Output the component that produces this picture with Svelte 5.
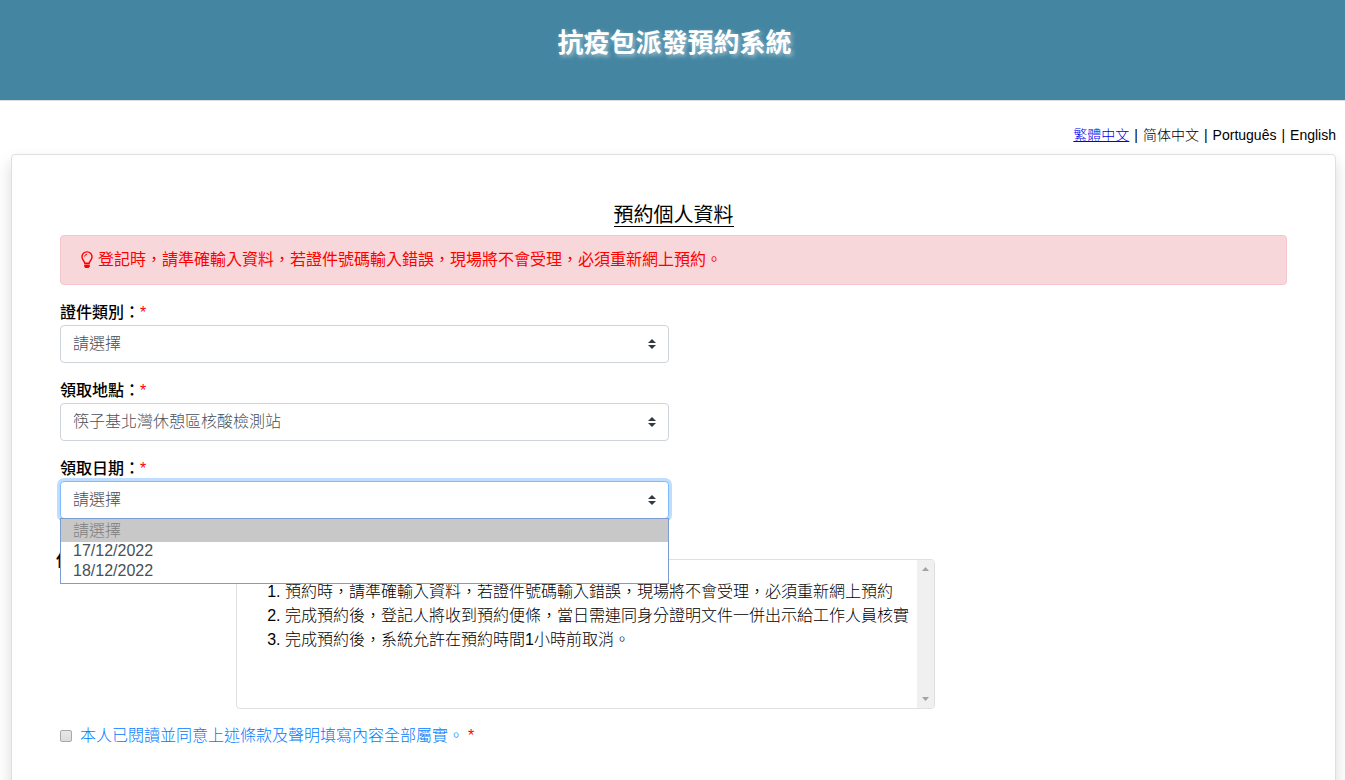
<script lang="ts">
	const languages = [
		{ code: 'zh-Hant', name: '繁體中文' },
		{ code: 'zh-Hans', name: '简体中文' },
		{ code: 'pt', name: 'Português' },
		{ code: 'en', name: 'English' }
	];

	const idTypes = ['澳門居民身份證', '外地僱員身份認別證', '護照'];
	const locations = ['筷子基北灣休憩區核酸檢測站'];
	const dates = ['17/12/2022', '18/12/2022'];

	const terms = [
		'預約時，請準確輸入資料，若證件號碼輸入錯誤，現場將不會受理，必須重新網上預約',
		'完成預約後，登記人將收到預約便條，當日需連同身分證明文件一併出示給工作人員核實',
		'完成預約後，系統允許在預約時間1小時前取消。'
	];

	let current = $state('zh-Hant');
	let idType = $state('');
	let location = $state(locations[0]);
	let date = $state('');
	let dateOpen = $state(true);
	let agreed = $state(false);

	function toggleDates(e: MouseEvent) {
		e.preventDefault();
		dateOpen = !dateOpen;
	}

	function pickDate(value: string) {
		date = value;
		dateOpen = false;
	}

	function switchLanguage(e: MouseEvent, code: string) {
		e.preventDefault();
		current = code;
	}
</script>

{#snippet caret()}
	<svg class="caret" viewBox="0 0 4 5" aria-hidden="true">
		<path fill="#343a40" d="M2 0L0 2h4zm0 5L0 3h4z" />
	</svg>
{/snippet}

<div class="page" lang="zh-Hant">
	<header>
		<h1>抗疫包派發預約系統</h1>
	</header>

	<nav>
		{#each languages as language, i (language.code)}
			{#if i > 0}<span>|</span>{/if}
			<a
				href="#{language.code}"
				lang={language.code}
				class:active={current === language.code}
				onclick={(e) => switchLanguage(e, language.code)}>{language.name}</a
			>
		{/each}
	</nav>

	<main>
		<h2><span>預約個人資料</span></h2>

		<div class="alert" role="alert">
			<svg viewBox="0 0 12 18" aria-hidden="true">
				<path
					d="M3.8 12.2C3.6 10 1 9 1 5.9a5 5 0 0 1 10 0C11 9 8.4 10 8.2 12.2z"
					fill="none"
					stroke="currentColor"
					stroke-width="1.4"
				/>
				<path d="M3.6 5.6A2.3 2.3 0 0 1 6 3.4" fill="none" stroke="currentColor" />
				<path d="M3.2 13.6h5.6v1.8L7.6 17H4.4l-1.2-1.6z" fill="currentColor" />
			</svg>
			<span>登記時，請準確輸入資料，若證件號碼輸入錯誤，現場將不會受理，必須重新網上預約。</span>
		</div>

		<form>
			<div class="field">
				<label for="id-type">證件類別：<span class="required">*</span></label>
				<div class="control">
					<select id="id-type" bind:value={idType}>
						<option value="" disabled>請選擇</option>
						{#each idTypes as item}
							<option value={item}>{item}</option>
						{/each}
					</select>
					{@render caret()}
				</div>
			</div>

			<div class="field">
				<label for="location">領取地點：<span class="required">*</span></label>
				<div class="control">
					<select id="location" bind:value={location}>
						{#each locations as item}
							<option value={item}>{item}</option>
						{/each}
					</select>
					{@render caret()}
				</div>
			</div>

			<div class="field">
				<label for="date">領取日期：<span class="required">*</span></label>
				<div class="control">
					<select id="date" class:open={dateOpen} bind:value={date} onmousedown={toggleDates}>
						<option value="" disabled>請選擇</option>
						{#each dates as item}
							<option value={item}>{item}</option>
						{/each}
					</select>
					{@render caret()}
					{#if dateOpen}
						<div class="menu">
							<button type="button" class="placeholder" disabled>請選擇</button>
							{#each dates as item}
								<button type="button" onclick={() => pickDate(item)}>{item}</button>
							{/each}
						</div>
					{/if}
				</div>
			</div>

			<section class="terms">
				<h3>使用條款：</h3>
				<div class="terms-box">
					<ol>
						{#each terms as term}
							<li>{term}</li>
						{/each}
					</ol>
					<div class="scrollbar" aria-hidden="true">
						<svg viewBox="0 0 7 4"><path d="M3.5 0L7 4H0z" /></svg>
						<svg viewBox="0 0 7 4"><path d="M0 0h7L3.5 4z" /></svg>
					</div>
				</div>
			</section>

			<div class="agree">
				<input id="agree" type="checkbox" bind:checked={agreed} />
				<label for="agree">本人已閱讀並同意上述條款及聲明填寫內容全部屬實。</label>
				<span class="required">*</span>
			</div>
		</form>
	</main>
</div>

<style>
	:global(body) {
		background: #fff;
	}
	.page {
		font-family: 'Liberation Sans', 'Noto Sans CJK TC', sans-serif;
		font-size: 16px;
		font-weight: 300;
		line-height: 24px;
		color: #000;
	}
	header {
		box-sizing: border-box;
		height: 101px;
		padding: 24px 0 0 4px;
		background: #4486a2;
		border-bottom: 1px solid #ddd;
		text-align: center;
	}
	h1 {
		margin: 0;
		font-size: 26px;
		line-height: 38px;
		color: #fff;
		text-shadow: 2px 2px 4px rgba(255, 255, 255, 0.5);
	}
	nav {
		display: flex;
		justify-content: flex-end;
		gap: 5px;
		padding: 22px 9px 7px;
		font-size: 14px;
	}
	nav a {
		color: #000;
		text-decoration: none;
	}
	nav a[lang='zh-Hans'] {
		font-family: 'Liberation Sans', 'Noto Sans CJK SC', sans-serif;
	}
	nav a.active {
		color: #0000ee;
		text-decoration: underline;
	}
	main {
		margin: 0 9px 0 11px;
		padding: 50px 48px 60px;
		border: 1px solid #dfdfdf;
		border-radius: 4px;
		box-shadow: 0 8px 16px rgba(0, 0, 0, 0.15);
	}
	h2 {
		display: flex;
		justify-content: center;
		margin: 0 0 8px;
		font-size: 20px;
		font-weight: 400;
		line-height: 21px;
	}
	h2 span {
		border-bottom: 1px solid #000;
	}
	.alert {
		display: flex;
		align-items: center;
		gap: 5px;
		padding: 12px 20px;
		background: #f8d7da;
		border: 1px solid #f5c6cb;
		border-radius: 4px;
		font-weight: 400;
		color: #f00;
	}
	.alert svg {
		flex: none;
		width: 12px;
		height: 18px;
	}
	.field {
		width: calc(50% - 5px);
		margin-top: 16px;
	}
	.field label {
		display: block;
		font-weight: 500;
	}
	.required {
		color: #f00;
		font-weight: 400;
	}
	.control {
		position: relative;
	}
	select {
		display: block;
		box-sizing: border-box;
		width: 100%;
		height: 38px;
		padding: 6px 28px 6px 12px;
		appearance: none;
		background: #fff;
		border: 1px solid #ced4da;
		border-radius: 4px;
		outline: none;
		font: inherit;
		color: #495057;
	}
	select:focus,
	select.open {
		border-color: #80bdff;
		box-shadow: 0 0 0 3px rgba(0, 123, 255, 0.25);
	}
	.caret {
		position: absolute;
		top: 14px;
		right: 13px;
		width: 8px;
		height: 10px;
		pointer-events: none;
	}
	.menu {
		position: absolute;
		z-index: 1;
		top: 37px;
		left: 0;
		right: 0;
		padding-bottom: 1px;
		background: #fff;
		border: 1px solid #7a9cd3;
	}
	.menu button {
		display: block;
		width: 100%;
		height: 20px;
		padding: 0 12px 2px;
		border: 0;
		background: #fff;
		font: inherit;
		line-height: 18px;
		text-align: left;
		color: #495057;
	}
	.menu button.placeholder {
		height: 23px;
		padding-bottom: 0;
		line-height: 23px;
		background: #c8c8c8;
		color: #808080;
	}
	.menu button:hover:enabled {
		background: #e8e8e8;
	}
	.terms {
		display: grid;
		grid-template-columns: 180px 53fr 27fr;
		align-items: start;
		margin: 40px -4px 0;
	}
	h3 {
		margin: -10px 0 0;
		font-size: 16px;
		font-weight: 500;
	}
	.terms-box {
		display: flex;
		box-sizing: border-box;
		height: 150px;
		border: 1px solid #dfdfdf;
		border-radius: 4px;
		overflow: hidden;
	}
	ol {
		flex: 1;
		margin: 0;
		padding: 20px 0 0 48px;
	}
	.scrollbar {
		display: flex;
		flex-direction: column;
		justify-content: space-between;
		align-items: center;
		width: 17px;
		padding: 7px 0;
		box-sizing: border-box;
		background: #f0f0f0;
	}
	.scrollbar svg {
		width: 7px;
		height: 4px;
		fill: #a3a3a3;
	}
	.agree {
		display: flex;
		align-items: center;
		margin-top: 15px;
	}
	.agree input {
		box-sizing: border-box;
		width: 12px;
		height: 12px;
		margin: 0 8px 0 0;
		appearance: none;
		background: linear-gradient(#e8e8e8, #dcdcdc);
		border: 1px solid #a8a8a8;
		border-radius: 2px;
	}
	.agree input:checked {
		background: #007bff;
	}
	.agree label {
		color: #007bff;
	}
	.agree .required {
		margin-left: 4px;
	}
</style>
